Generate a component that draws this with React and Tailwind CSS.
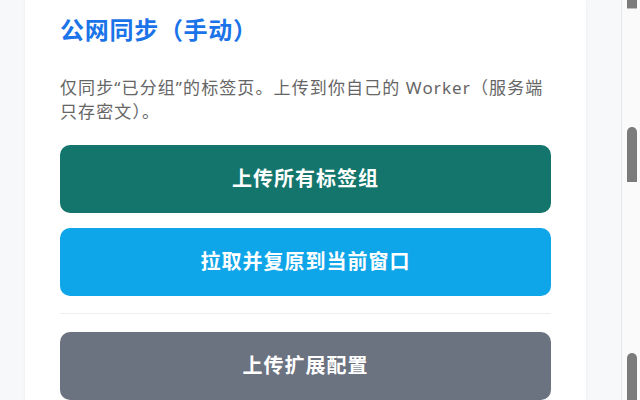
const SyncPanel = () => {
  return (
    <div className="bg-white shadow-[0_0_3px_rgba(0,0,0,0.06)] px-[35px] pt-[14px] pb-10">
      {/* 标题 */}
      <h2 className="text-2xl leading-8 font-bold tracking-[0.03em] text-[#1a73e8]">公网同步（手动）</h2>

      <p className="mt-[30px] text-[17px] leading-6 tracking-[0.065em] text-[#666]">
        仅同步“已分组”的标签页。上传到你自己的 Worker（服务端只存密文）。
      </p>

      {/* 操作按钮 */}
      <div className="mt-[21px] flex flex-col gap-[15px]">
        <button className="h-[68px] rounded-[10px] bg-[#13756b] text-white text-xl font-bold tracking-[0.05em]">
          上传所有标签组
        </button>
        <button className="h-[68px] rounded-[10px] bg-[#0ea5e9] text-white text-xl font-bold tracking-[0.05em]">
          拉取并复原到当前窗口
        </button>
      </div>

      <div className="mt-[17px] mb-[18px] h-px bg-[#eeeeee]" />

      <button className="w-full h-[68px] rounded-[10px] bg-[#6b7280] text-white text-xl font-bold tracking-[0.05em]">
        上传扩展配置
      </button>
    </div>
  );
};

const FakeScrollbar = () => (
  <div className="w-[19px] shrink-0 border-l border-[#e6e6e6] bg-[#fafafa] flex flex-col pl-[5px]">
    <div className="w-[10px] h-[9px] bg-[#7b7b7b] border-b border-[#bdbdbd]" />
    <div className="w-[10px] h-[55px] mt-[118px] bg-[#7b7b7b] rounded-t-full" />
    <div className="w-[10px] flex-1 mt-[171px] bg-[#7b7b7b] rounded-t-full" />
  </div>
);

export default function App() {
  return (
    <div
      className="w-[640px] h-[400px] overflow-hidden flex bg-[#f7f8fa]"
      style={{ fontFamily: '"Noto Sans", "Noto Sans CJK SC", sans-serif' }}
    >
      <div className="flex-1 pl-[25px] pr-[35px]">
        <SyncPanel />
      </div>
      <FakeScrollbar />
    </div>
  );
}
